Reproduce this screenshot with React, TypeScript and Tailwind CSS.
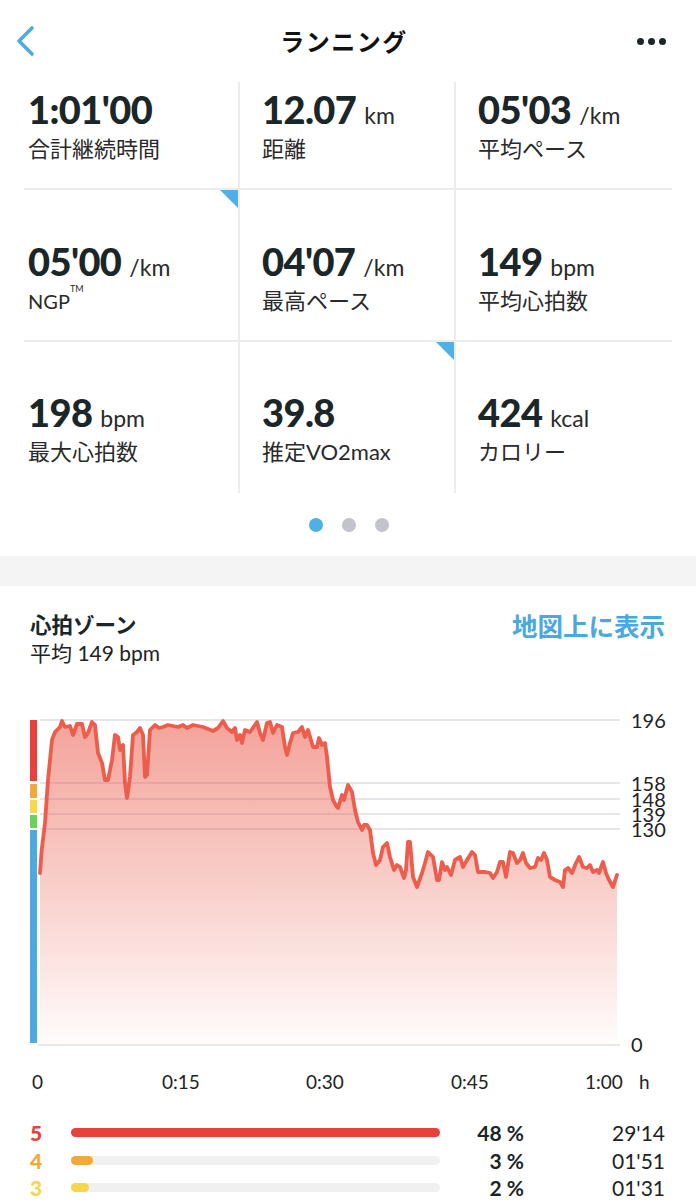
import React from 'react';

const stats = [
  { value: "1:01'00", unit: '', label: '合計継続時間' },
  { value: '12.07', unit: 'km', label: '距離' },
  { value: "05'03", unit: '/km', label: '平均ペース' },
  { value: "05'00", unit: '/km', label: 'NGP™' },
  { value: "04'07", unit: '/km', label: '最高ペース' },
  { value: '149', unit: 'bpm', label: '平均心拍数' },
  { value: '198', unit: 'bpm', label: '最大心拍数' },
  { value: '39.8', unit: '', label: '推定VO2max' },
  { value: '424', unit: 'kcal', label: 'カロリー' },
];

// cells with the blue corner marker
const cornerIdx = [3, 7];

// heart rate trace, in page coordinates
const hr: [number, number][] = [
  [40, 873], [41.7, 850], [45, 823], [48, 780], [52, 740], [55, 732], [60, 727], [62, 721], [65, 727],
  [70, 726], [73, 735], [77, 724], [82, 724], [85, 737], [88, 733], [92, 722], [95, 725], [98, 753],
  [102, 763], [105, 780], [108, 780], [112, 760], [115, 735], [118, 737], [120, 750], [123, 745],
  [125, 783], [127, 798], [130, 777], [133, 735], [137, 732], [140, 728], [143, 735], [145, 777],
  [147, 775], [150, 730], [155, 725], [159, 728], [163, 727], [168, 725], [173, 726], [178, 727], [183, 725], [187, 728], [193, 725],
  [198, 726], [203, 727], [208, 729], [213, 731], [218, 728], [223, 721], [227, 728], [232, 732], [235, 728], [237, 740],
  [240, 735], [242, 743], [245, 730], [250, 732], [257, 722], [260, 733], [263, 740], [267, 723],
  [270, 722], [273, 733], [277, 725], [282, 727], [285, 747], [287, 755], [290, 743], [293, 733],
  [298, 732], [302, 727], [305, 737], [308, 730], [313, 747], [317, 747], [319, 738], [322, 745],
  [325, 743], [327, 757], [330, 787], [333, 800], [337, 807], [338, 808], [342, 795], [344, 800],
  [348, 785], [352, 792], [355, 810], [358, 822], [362, 830], [364, 825], [367, 825], [370, 830],
  [373, 853], [376, 865], [380, 860], [383, 847], [387, 843], [390, 857], [394, 870], [397, 865],
  [400, 867], [404, 878], [406, 870], [408, 842], [410, 842], [413, 877], [417, 887], [422, 873],
  [425, 863], [428, 852], [433, 857], [437, 880], [439, 880], [442, 862], [445, 870], [447, 867],
  [451, 875], [455, 860], [460, 857], [463, 867], [467, 860], [472, 852], [475, 855], [478, 872],
  [485, 872], [490, 873], [493, 878], [497, 872], [500, 862], [503, 862], [506, 877], [510, 852],
  [513, 853], [517, 863], [520, 860], [523, 853], [526, 863], [530, 868], [535, 867], [538, 858],
  [541, 860], [544, 853], [547, 860], [550, 877], [555, 880], [560, 882], [563, 887], [565, 870],
  [568, 868], [572, 873], [576, 863], [579, 857], [583, 867], [587, 868], [590, 865], [593, 872],
  [597, 870], [599, 873], [603, 862], [606, 873], [609, 880], [613, 887], [617, 875],
];

const linePath = hr.map(([x, y], i) => `${i === 0 ? 'M' : 'L'}${x} ${y}`).join(' ');
const areaPath = `${linePath} L617 1044 L40 1044 Z`;

const grid = [720, 783, 799, 814, 829];

const yLabels = [
  { t: '196', y: 720 },
  { t: '158', y: 783 },
  { t: '148', y: 799 },
  { t: '139', y: 814 },
  { t: '130', y: 829 },
  { t: '0', y: 1044 },
];

const zones = [
  { n: '5', text: '48 %', time: "29'14", num: 'text-[#e8413c]', bar: 'bg-[#e8413c]', w: 'w-full' },
  { n: '4', text: '3 %', time: "01'51", num: 'text-[#f2a93b]', bar: 'bg-[#f2a93b]', w: 'w-[22px]' },
  { n: '3', text: '2 %', time: "01'31", num: 'text-[#f6d74a]', bar: 'bg-[#f6d74a]', w: 'w-[18px]' },
];

export default function App() {
  return (
    <div className="w-[696px] h-[1200px] overflow-hidden bg-white text-[#1b2629] font-['Lato','Noto_Sans_CJK_JP',sans-serif]">
      {/* Header */}
      <div className="h-[82px] flex items-center justify-between pl-[15px] pr-[30px]">
        <svg width="22" height="32" viewBox="0 0 22 32" fill="none">
          <path d="M17 3 L4 16 L17 29" stroke="#4fa9e2" strokeWidth="3.6" strokeLinecap="round" strokeLinejoin="round" />
        </svg>
        <h1 className="text-[24px] font-bold tracking-[1.5px] text-[#111] font-['Noto_Sans_CJK_JP',sans-serif] pl-[14px]">ランニング</h1>
        <div className="flex gap-[4px]">
          <span className="w-[7px] h-[7px] rounded-full bg-[#1b2629]" />
          <span className="w-[7px] h-[7px] rounded-full bg-[#1b2629]" />
          <span className="w-[7px] h-[7px] rounded-full bg-[#1b2629]" />
        </div>
      </div>

      {/* Stats grid */}
      <div className="mx-[24px] grid grid-cols-3">
        {stats.map((s, i) => {
          const row = Math.floor(i / 3);
          const col = i % 3;
          return (
            <div
              key={i}
              className={[
                'relative border-[#ececec]',
                row === 0 ? 'h-[108px] pt-[7px]' : row === 1 ? 'h-[152px] pt-[51px]' : 'h-[151px] pt-[50px]',
                row < 2 ? 'border-b-2' : '',
                col < 2 ? 'border-r-2' : '',
                col === 0 ? 'pl-[4px]' : 'pl-[22px]',
              ].join(' ')}
            >
              {cornerIdx.includes(i) && (
                <div className="absolute right-0 top-0 w-0 h-0 border-t-[18px] border-l-[18px] border-t-[#4fb0e6] border-l-transparent" />
              )}
              <div className="flex items-baseline h-[40px] leading-[40px] overflow-visible">
                <span className="text-[38px] font-black tracking-[-0.6px]">{s.value}</span>
                {s.unit && <span className="ml-[8px] text-[23px] text-[#2a2a2a]">{s.unit}</span>}
              </div>
              <div className="mt-[6px] h-[28px] text-[22px] leading-[28px] text-[#2a2a2a]">
                {s.label === 'NGP™' ? (
                  <span className="text-[20px]">NGP<sup className="text-[9px] align-top relative top-[2px]">TM</sup></span>
                ) : (
                  s.label
                )}
              </div>
            </div>
          );
        })}
      </div>

      {/* Pager dots */}
      <div className="flex justify-center gap-[19px] pt-[25px] pb-[24px] pl-[1px]">
        <span className="w-[14px] h-[14px] rounded-full bg-[#4fb0e6]" />
        <span className="w-[14px] h-[14px] rounded-full bg-[#c3c4cb]" />
        <span className="w-[14px] h-[14px] rounded-full bg-[#c3c4cb]" />
      </div>

      <div className="h-[30px] bg-[#f4f4f5]" />

      {/* Heart rate zones */}
      <div className="pt-[25px] pl-[30px] pr-[31px] flex justify-between items-start">
        <div>
          <div className="text-[21.5px] leading-[28px] font-bold">心拍ゾーン</div>
          <div className="text-[21px] leading-[27px] text-[#222]">平均 149 bpm</div>
        </div>
        <div className="text-[25.5px] leading-[28px] font-bold text-[#4aa8e0] font-['Noto_Sans_CJK_JP',sans-serif]">地図上に表示</div>
      </div>

      <div className="relative h-[345px] mt-[44px]">
        <svg width="696" height="345" viewBox="0 710 696 345" className="block">
          <defs>
            <linearGradient id="hrfill" x1="0" y1="720" x2="0" y2="1044" gradientUnits="userSpaceOnUse">
              <stop offset="0" stopColor="#ea5b4b" stopOpacity="0.56" />
              <stop offset="0.5" stopColor="#ea5b4b" stopOpacity="0.3" />
              <stop offset="1" stopColor="#ea5b4b" stopOpacity="0.02" />
            </linearGradient>
          </defs>
          {grid.map((y) => (
            <line key={y} x1="40" x2="620" y1={y} y2={y} stroke="#e5e5ec" strokeWidth="2" />
          ))}
          <path d={areaPath} fill="url(#hrfill)" />
          <line x1="38" x2="620" y1="1045" y2="1045" stroke="#e8e8ee" strokeWidth="2" />
          <path d={linePath} fill="none" stroke="#ee5c4b" strokeWidth="3.8" strokeLinejoin="round" strokeLinecap="round" />
          <rect x="30" y="720" width="7" height="61" fill="#e8413c" />
          <rect x="30" y="784" width="7" height="14" fill="#f2a93b" />
          <rect x="30" y="800" width="7" height="13" fill="#f8d84d" />
          <rect x="30" y="815" width="7" height="13" fill="#6cd35a" />
          <rect x="30" y="830" width="7" height="213" fill="#4fa8e0" />
        </svg>
        {yLabels.map((l) => (
          <span
            key={l.t}
            className="absolute left-[631px] text-[20px] leading-[15px] text-[#222] -translate-y-1/2"
            style={{ top: l.y - 710 }}
          >
            {l.t}
          </span>
        ))}
      </div>

      {/* X axis */}
      <div className="relative h-[24px] mt-[15px] text-[19px] leading-[24px] text-[#222]">
        <span className="absolute left-[32px]">0</span>
        <span className="absolute left-[162px]">0:15</span>
        <span className="absolute left-[306px]">0:30</span>
        <span className="absolute left-[451px]">0:45</span>
        <span className="absolute left-[585px]">1:00</span>
        <span className="absolute left-[639px]">h</span>
      </div>

      <div className="mt-[25px] pl-[30px] pr-[31px]">
        {zones.map((z) => (
          <div key={z.n} className="flex items-center h-[27.5px]">
            <span className={`w-[41px] text-[21px] font-black ${z.num}`}>{z.n}</span>
            <div className="w-[369px] h-[9px] rounded-full bg-[#f0f0f0]">
              <div className={`h-full rounded-full ${z.bar} ${z.w}`} />
            </div>
            <span className="w-[84px] text-right text-[21px] font-bold">{z.text}</span>
            <span className="flex-1 text-right text-[21px] text-[#222]">{z.time}</span>
          </div>
        ))}
      </div>
    </div>
  );
}
